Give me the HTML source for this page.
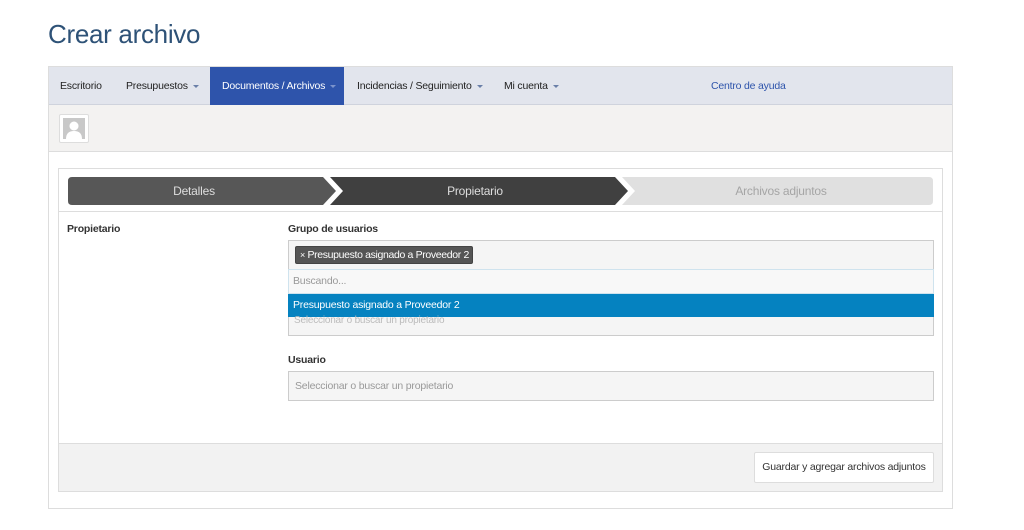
<!DOCTYPE html>
<html><head><style>
*{box-sizing:border-box;margin:0;padding:0}
body{width:1024px;height:530px;background:#fff;font-family:"Liberation Sans",sans-serif;position:relative;overflow:hidden;font-size:10.5px;color:#333;letter-spacing:-0.2px}
.a{position:absolute;white-space:nowrap}
h1{position:absolute;left:48px;top:19px;font-size:26px;font-weight:normal;color:#2e5277;letter-spacing:-0.3px}
.nav span{position:absolute;top:0;height:38px;line-height:38px;font-size:10.5px;color:#222;white-space:nowrap}
.car{display:inline-block;border-left:3px solid transparent;border-right:3px solid transparent;border-top:3px solid #6a7fa8;vertical-align:middle;margin-left:5px}
.box{border:1px solid #ccc;background:#f5f5f5;position:absolute}
</style></head><body>
<h1>Crear archivo</h1>
<div class="a" style="left:48px;top:66px;width:905px;height:443px;border:1px solid #ddd"></div>
<div class="a nav" style="left:49px;top:67px;width:903px;height:38px;background:#e2e5ed;border-bottom:1px solid #cfd3dd">
 <span style="left:11px">Escritorio</span>
 <span style="left:77px">Presupuestos<i class="car"></i></span>
 <span style="left:161px;width:134px;background:#2e54ab;color:#fff;padding-left:12px">Documentos / Archivos<i class="car" style="border-top-color:#7b93cc"></i></span>
 <span style="left:308px">Incidencias / Seguimiento<i class="car"></i></span>
 <span style="left:455px">Mi cuenta<i class="car"></i></span>
 <span style="left:662px;color:#2e54ab">Centro de ayuda</span>
</div>
<div class="a" style="left:49px;top:105px;width:903px;height:47px;background:#f3f2f1;border-bottom:1px solid #ddd"></div>
<div class="a" style="left:59px;top:114px;width:30px;height:29px;background:#fff;border:1px solid #ddd;border-radius:2px;padding:3px">
 <svg width="22" height="21" viewBox="0 0 22 21"><rect width="22" height="21" fill="#c8c8c8"/><circle cx="11" cy="8" r="4.5" fill="#fff"/><path d="M3 21 Q3 13 11 13 Q19 13 19 21Z" fill="#fff"/></svg>
</div>
<div class="a" style="left:58px;top:168px;width:885px;height:324px;border:1px solid #ddd"></div>
<svg class="a" style="left:68px;top:177px" width="865" height="28">
 <path d="M4 0H255L268 14L255 28H4Q0 28 0 24V4Q0 0 4 0Z" fill="#575757"/>
 <path d="M262 0H547L560 14L547 28H262L275 14Z" fill="#404040"/>
 <path d="M554 0H861Q865 0 865 4V24Q865 28 861 28H554L567 14Z" fill="#e0e0e0"/>
 <text x="126" y="18" font-size="12" fill="#ddd" text-anchor="middle" font-family="Liberation Sans">Detalles</text>
 <text x="407" y="18" font-size="12" fill="#ddd" text-anchor="middle" font-family="Liberation Sans">Propietario</text>
 <text x="713" y="18" font-size="12" fill="#a5a5a5" text-anchor="middle" font-family="Liberation Sans">Archivos adjuntos</text>
</svg>
<div class="a" style="left:59px;top:211px;width:883px;border-top:1px solid #ddd"></div>
<div class="a" style="left:67px;top:223px;font-weight:bold">Propietario</div>
<div class="a" style="left:288px;top:223px;font-weight:bold">Grupo de usuarios</div>
<div class="box" style="left:288px;top:240px;width:646px;height:96px"></div>
<div class="a" style="left:295px;top:246px;height:18px;background:#555;border:1px solid #444;border-radius:2px;color:#fff;line-height:16px;padding:0 3px 0 4px;letter-spacing:-0.35px"><span style="font-size:9px">×</span> Presupuesto asignado a Proveedor 2</div>
<div class="a" style="left:288px;top:269px;width:646px;height:25px;background:#f8f8f8;border:1px solid #cfe3ee;color:#999;line-height:23px;padding-left:4px">Buscando...</div>
<div class="a" style="left:288px;top:294px;width:646px;height:23px;background:#0582c0;color:#fff;line-height:22px;padding-left:5px">Presupuesto asignado a Proveedor 2</div>
<div class="a" style="left:294px;top:315px;color:#bbb;font-size:10px">Seleccionar o buscar un propietario</div>
<div class="a" style="left:288px;top:354px;font-weight:bold">Usuario</div>
<div class="box" style="left:288px;top:371px;width:646px;height:30px;color:#999;line-height:28px;padding-left:6px;white-space:nowrap">Seleccionar o buscar un propietario</div>
<div class="a" style="left:59px;top:443px;width:883px;height:48px;background:#f2f2f2;border-top:1px solid #ddd"></div>
<div class="a" style="left:754px;top:452px;width:180px;height:31px;background:#fff;border:1px solid #ddd;border-radius:2px;line-height:29px;text-align:center;color:#333">Guardar y agregar archivos adjuntos</div>
</body></html>
